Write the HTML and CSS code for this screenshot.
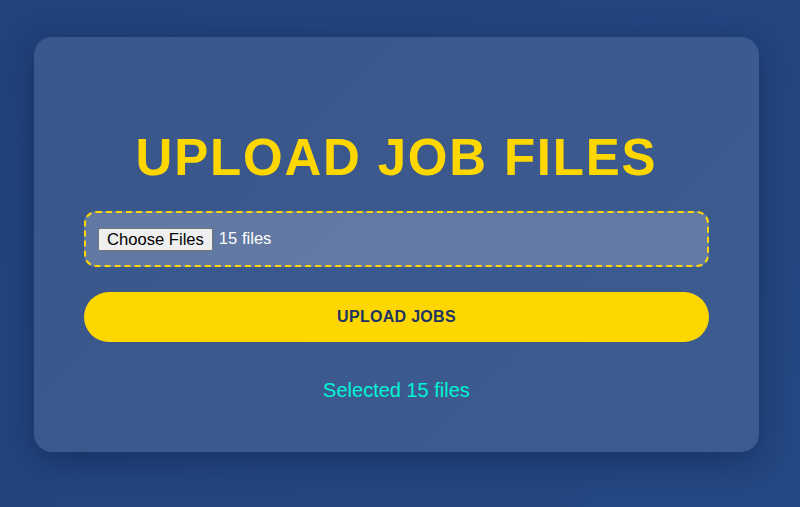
FILE: index.html
```html
<!DOCTYPE html>
<html lang="en">
<head>
<meta charset="utf-8">
<title>Upload Job Files</title>
<link rel="stylesheet" href="styles.css">
</head>
<body>
<main class="page">
  <section class="card">
    <h1 class="title">UPLOAD JOB FILES</h1>
    <div class="file-box">
      <span class="file-btn">Choose Files</span>
      <span class="file-name">15 files</span>
    </div>
    <button class="upload-btn" type="button">UPLOAD JOBS</button>
    <p class="status">Selected 15 files</p>
  </section>
</main>
</body>
</html>
```

FILE: styles.css
```css
* { box-sizing: border-box; }
html, body { margin: 0; height: 100%; }
body {
  background: linear-gradient(135deg, #22427c 0%, #244883 100%);
  font-family: "Liberation Sans", Arial, sans-serif;
}
.page {
  height: 507px;
  padding: 37px 41px 55px 34px;
  display: flex;
}
.card {
  width: 725px;
  height: 415px;
  background: rgba(255, 255, 255, 0.11);
  border-radius: 18px;
  box-shadow: 0 8px 32px rgba(10, 25, 60, 0.45);
  padding: 0 50px;
  display: flex;
  flex-direction: column;
  align-items: stretch;
}
.title {
  margin: 90px 0 0;
  height: 62px;
  text-align: center;
  color: #ffd700;
  font-size: 51px;
  line-height: 62px;
  font-weight: bold;
  letter-spacing: 1.8px;
}
.file-box {
  margin-top: 22px;
  height: 56px;
  border: 2px dashed #ffd700;
  border-radius: 12px;
  background: rgba(255, 255, 255, 0.2);
  display: flex;
  align-items: center;
  padding: 0 12px;
  gap: 6px;
}
.file-btn {
  background: #efefef;
  border: 1px solid #767676;
  border-radius: 2px;
  color: #000;
  font-size: 16.6px;
  height: 23px;
  line-height: 21px;
  padding: 0 8px;
}
.file-name {
  color: #fff;
  font-size: 16.6px;
}
.upload-btn {
  margin-top: 25px;
  height: 50px;
  border: none;
  border-radius: 25px;
  background: #ffd700;
  color: #1c3463;
  font-family: "Liberation Sans", Arial, sans-serif;
  font-size: 16px;
  font-weight: bold;
  letter-spacing: 0.3px;
}
.status {
  margin: 36px 0 0;
  text-align: center;
  color: #00f5d4;
  font-size: 20px;
  line-height: 24px;
}
```
